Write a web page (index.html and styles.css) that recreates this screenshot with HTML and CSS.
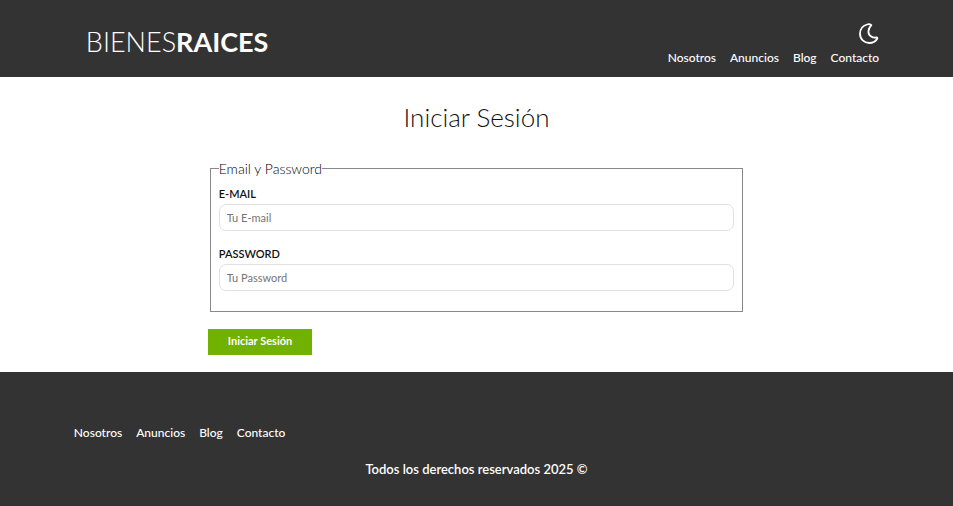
FILE: index.html
```html
<!DOCTYPE html>
<html lang="es">
<head>
<meta charset="utf-8">
<title>Bienes Raices</title>
<link rel="stylesheet" href="styles.css">
</head>
<body>
<header class="header">
  <div class="container header-bar">
    <a class="logo" href="#">BIENES<b>RAICES</b></a>
    <div class="right">
      <button class="dark-toggle" type="button" aria-label="Modo oscuro">
        <svg viewBox="0 0 20 22" width="20" height="22" fill="none" stroke="#fff" stroke-width="1.800" stroke-linecap="round" stroke-linejoin="round"><path d="M12.300 2.200C11 1 9.500 1 8 1.500 3.500 2.800 1 6.500 1 10.800 1 16.300 5.200 20 10.200 20c3.300 0 6.300-1.500 7.800-4 .6-1 .3-1.600-.8-1.500-1.700.3-3.500.1-5-1C8.200 11 8.800 6 12.300 2.200z"/></svg>
      </button>
      <nav class="nav">
        <a href="#">Nosotros</a>
        <a href="#">Anuncios</a>
        <a href="#">Blog</a>
        <a href="#">Contacto</a>
      </nav>
    </div>
  </div>
</header>
<main class="main">
  <h1>Iniciar Sesión</h1>
  <form class="form">
    <fieldset>
      <legend>Email y Password</legend>
      <label for="email">E-mail</label>
      <input id="email" type="email" placeholder="Tu E-mail">
      <label for="password">Password</label>
      <input id="password" type="password" placeholder="Tu Password">
    </fieldset>
    <button class="submit" type="submit">Iniciar Sesión</button>
  </form>
</main>
<footer class="footer">
  <nav class="nav container">
    <a href="#">Nosotros</a>
    <a href="#">Anuncios</a>
    <a href="#">Blog</a>
    <a href="#">Contacto</a>
  </nav>
  <p class="copyright">Todos los derechos reservados 2025 ©</p>
</footer>
</body>
</html>
```
FILE: styles.css
```css
* { box-sizing: border-box; }
body {
  margin: 0;
  font-family: Lato, sans-serif;
  font-size: 12px;
  color: #111;
  background: #fff;
}
a { color: #fff; text-decoration: none; }
.header { background: #333; padding: 23px 0 8px; }
.container { width: 84.5%; max-width: 960px; margin: 0 auto; }
.header-bar { display: flex; justify-content: space-between; align-items: flex-start; padding-left: 12px; }
.logo { font-size: 27px; font-weight: 300; line-height: 38px; }
.logo b { font-weight: 700; }
.right { display: flex; flex-direction: column; align-items: flex-end; gap: 2px; }
.dark-toggle { display: block; padding: 0; border: 0; background: none; }
.dark-toggle svg { display: block; }
.nav { display: flex; gap: 14px; font-weight: 500; line-height: 22px; }
.main { width: 56.4%; margin: 0 auto; padding: 22px 0 17px; }
h1 { margin: 0 0 24px; font-size: 26px; font-weight: 300; line-height: 37px; text-align: center; }
fieldset { margin: 0 2px 17px; padding: 7px 8px 20px; border: 1px solid #888; }
legend { padding: 0; font-size: 14px; font-weight: 300; line-height: 17px; color: #000; }
label { display: block; font-size: 11px; font-weight: 600; line-height: 20px; text-transform: uppercase; }
input {
  display: block;
  width: 100%;
  height: 27px;
  padding: 0 7px;
  border: 1px solid #e1e1e1;
  border-radius: 7px;
  font: 11px Lato, sans-serif;
}
input + label { margin-top: 13px; }
input::placeholder { color: #757575; }
.submit { display: block; padding: 5px 20px 7px; border: 0; background: #71b100; color: #fff; font: 700 11px/14px Lato, sans-serif; }
.footer { background: #333; color: #fff; padding: 50px 0 27px; }
.copyright { margin: 15px 0 0; font-size: 13px; font-weight: 600; line-height: 20px; text-align: center; }
```
